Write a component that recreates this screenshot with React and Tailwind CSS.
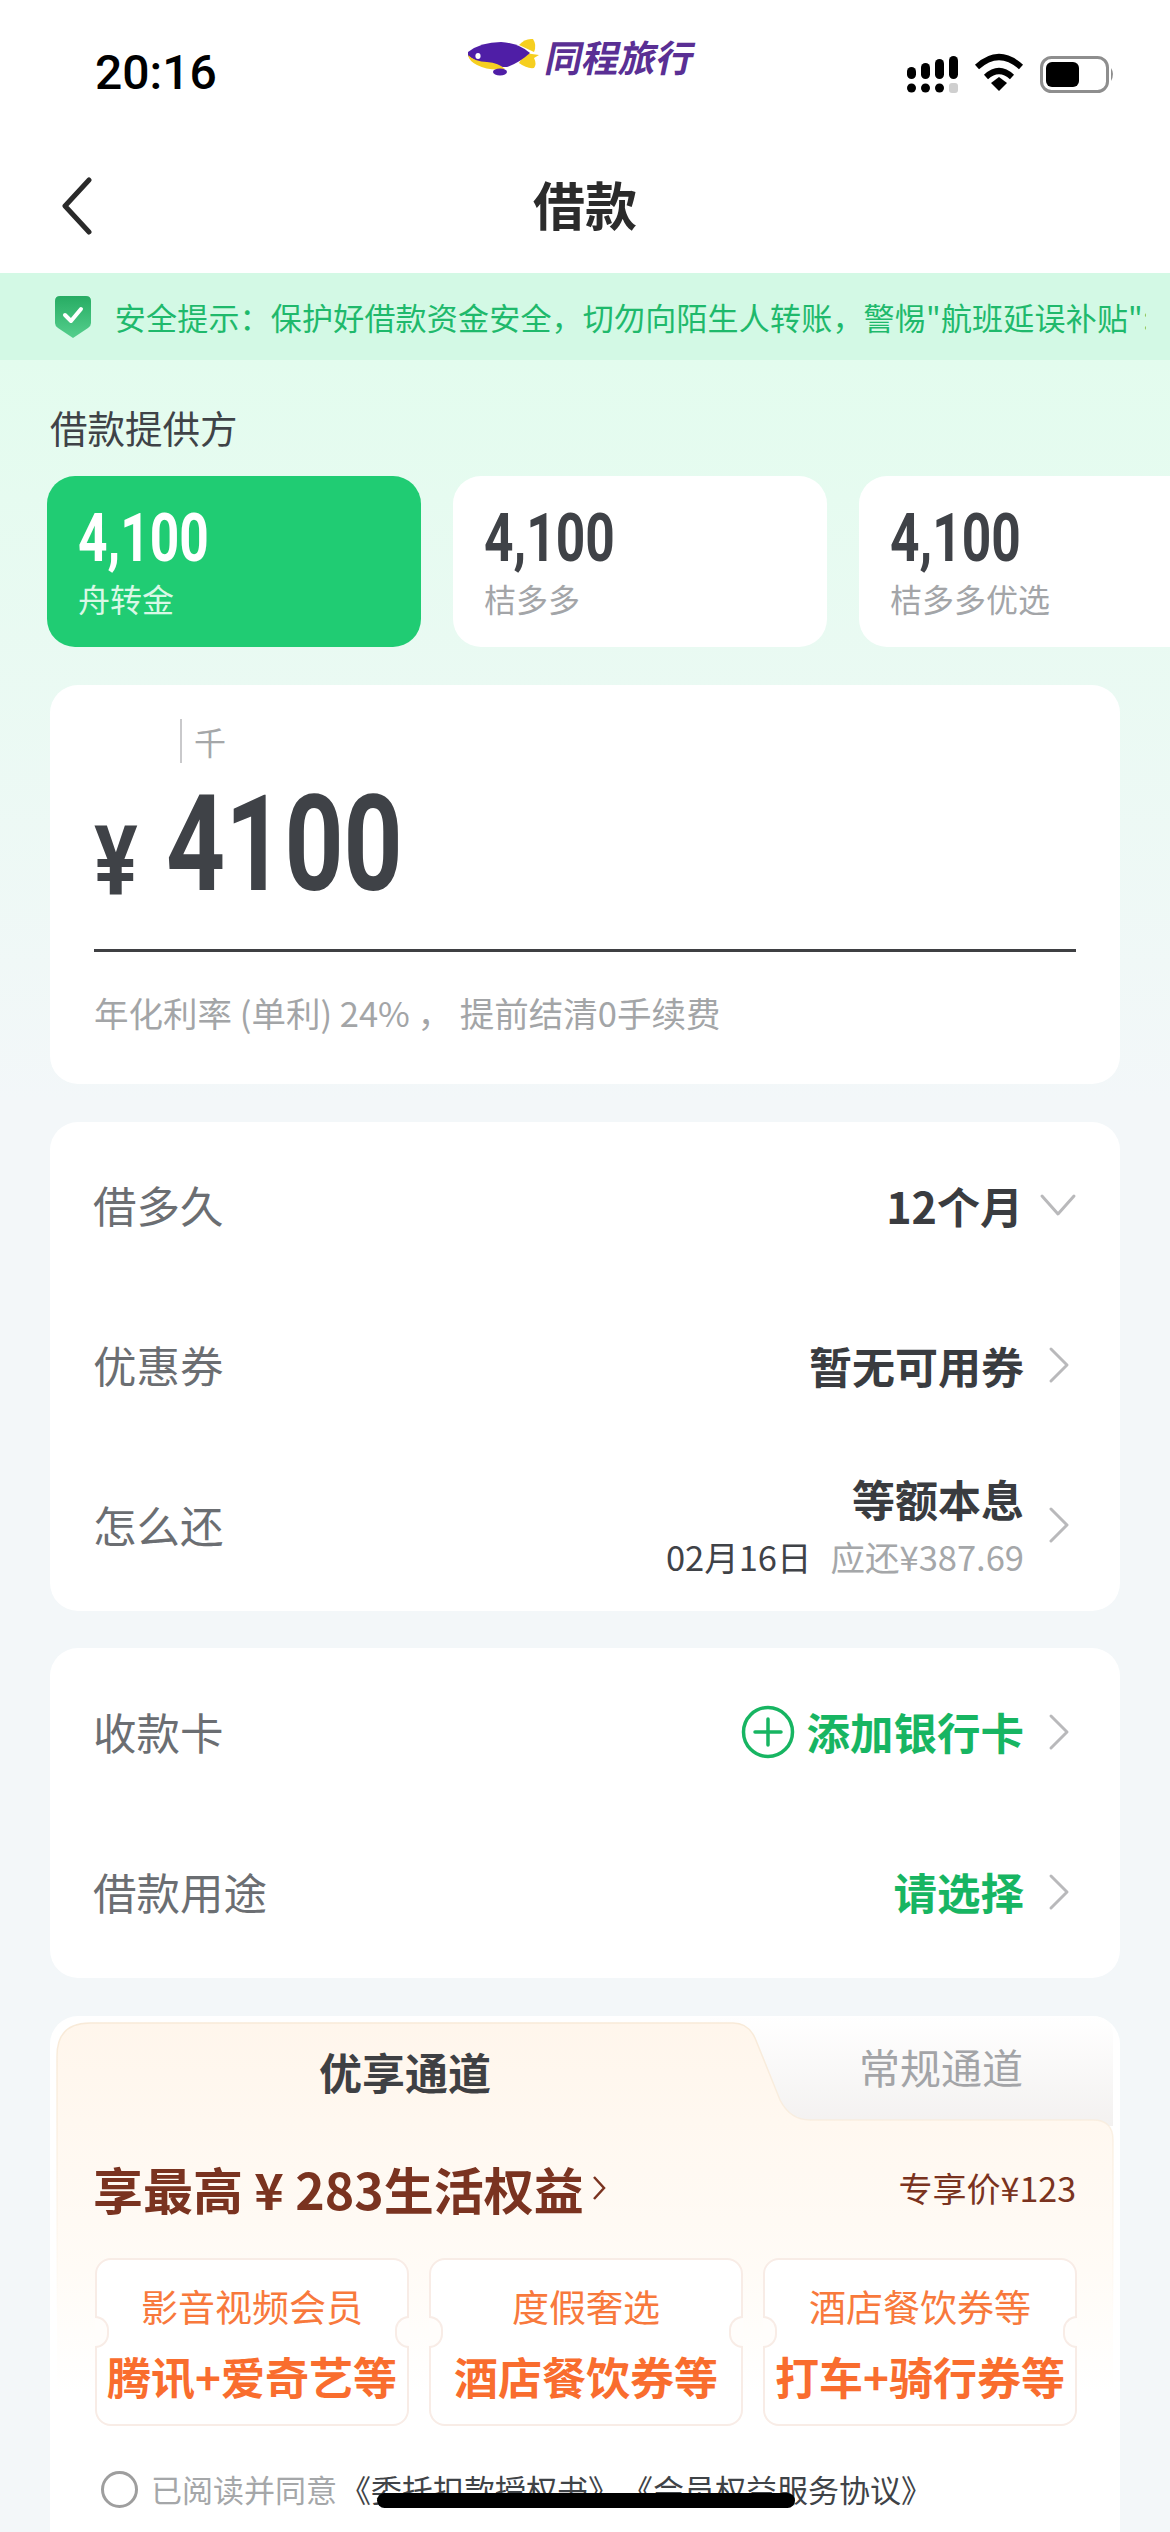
import React from "react";

const Chevron = ({ className = "" }) => (
  <svg className={className} width="22" height="38" viewBox="0 0 22 38" fill="none">
    <path d="M3 3 L19 19 L3 35" stroke="#b9b9bb" strokeWidth="3" strokeLinecap="round" strokeLinejoin="round" />
  </svg>
);

const Row = ({ label, children, chevron }) => (
  <div className="flex h-[160px] items-center justify-between pb-[4px] pl-[44px] pr-[50px]">
    <span className="-ml-[1px] text-[43.5px] leading-none text-[#6b6e72]">{label}</span>
    <div className="flex items-center">
      {children}
      {chevron || <Chevron className="ml-[24px]" />}
    </div>
  </div>
);

const Provider = ({ active, name }) => (
  <div className={`flex h-[171px] w-[374px] shrink-0 flex-col rounded-[28px] pl-[31px] pt-[27px] ${active ? "bg-[#20cc73]" : "bg-white"}`}>
    <span className={`origin-left scale-x-[0.78] font-['Roboto',sans-serif] text-[66px] font-bold leading-[72px] ${active ? "text-white" : "text-[#3f4247]"}`}>4,100</span>
    <span className={`mt-[3px] text-[32px] leading-[40px] ${active ? "text-[#d9f8e6]" : "text-[#a3a5a8]"}`}>{name}</span>
  </div>
);

const Coupon = ({ top, bottom }) => (
  <div className="relative flex h-[168px] w-[314px] flex-col items-center rounded-[16px] border-2 border-[#f8ece6] bg-white pt-[23px]">
    <span className="whitespace-nowrap text-[37px] leading-[46px] text-[#f8793c]">{top}</span>
    <span className="mt-[21px] whitespace-nowrap text-[44px] font-bold leading-[52px] text-[#f96d2e]">{bottom}</span>
    <div className="absolute -left-[2px] top-[56px] h-[32px] w-[14px] rounded-r-full border-2 border-l-0 border-[#f8ece6] bg-[#fffdfb]" />
    <div className="absolute -right-[2px] top-[56px] h-[32px] w-[14px] rounded-l-full border-2 border-r-0 border-[#f8ece6] bg-[#fffdfb]" />
  </div>
);

export default function App() {
  return (
    <div className="relative h-[2532px] w-[1170px] overflow-hidden bg-white font-['Noto_Sans_CJK_SC',sans-serif]">
      {/* status bar */}
      <div className="flex h-[136px] items-start pl-[95px]">
        <span className="mt-[43px] w-[372px] font-['Roboto',sans-serif] text-[48px] font-medium leading-[60px] text-black">20:16</span>
        <div className="mt-[36px] flex w-[440px] items-start">
          <svg width="72" height="42" viewBox="0 -4 72 42" className="mt-[1px]">
            <path d="M52 4 Q58 -3 66 -2 Q70 4 67 11 Z" fill="#f6cf20" />
            <path d="M52 22 Q60 28 67 27 Q70 23 67 17 L72 14 L58 12 Z" fill="#f6cf20" />
            <path d="M1 11 Q14 1 34 1 Q52 2 63 12 Q52 22 40 26 Q18 27 1 15 Z" fill="#4f1ea6" />
            <path d="M1 14 Q8 21 20 21 Q32 22 38 28 Q22 30 10 24 Q2 20 1 14 Z" fill="#f6cf20" />
            <ellipse cx="33" cy="31" rx="7" ry="3.4" fill="#4f1ea6" />
            <ellipse cx="11" cy="15" rx="2.6" ry="3" fill="#fff" />
          </svg>
          <span className="ml-[8px] -skew-x-12 whitespace-nowrap text-[37px] font-bold leading-[40px] text-[#5a2f94]">同程旅行</span>
        </div>
        <svg width="210" height="44" viewBox="0 0 210 44" className="mt-[53px]">
          <g fill="#000">
            <rect x="0" y="14" width="9" height="12" rx="4.5" />
            <rect x="14" y="10" width="9" height="16" rx="4.5" />
            <rect x="28" y="6" width="9" height="20" rx="4.5" />
            <rect x="42" y="3" width="9" height="23" rx="4.5" />
            <circle cx="4.5" cy="35" r="4.5" />
            <circle cx="18.5" cy="35" r="4.5" />
            <circle cx="32.5" cy="35" r="4.5" />
          </g>
          <rect x="42" y="30" width="9" height="10" rx="3" fill="#cfcfcf" />
          <g fill="none" stroke="#000" strokeWidth="6">
            <path d="M70 14 Q92 -6 114 14" />
            <path d="M79 24 Q92 12 105 24" />
          </g>
          <path d="M84 30 L92 24 L100 30 L92 38 Z" fill="#000" />
          <rect x="134.5" y="4.5" width="66" height="34" rx="10" fill="none" stroke="#8e8e8e" strokeWidth="3" />
          <rect x="139" y="9" width="33" height="25" rx="6" fill="#000" />
          <path d="M204 15 Q208 21 204 28 Z" fill="#8e8e8e" />
        </svg>
      </div>

      {/* nav */}
      <div className="relative flex h-[137px] items-center justify-center pb-[1px]">
        <svg width="34" height="58" viewBox="0 0 34 58" fill="none" className="absolute left-[60px] top-[41px]">
          <path d="M29 3 L5 29 L29 55" stroke="#2a2a2a" strokeWidth="5" strokeLinecap="round" strokeLinejoin="round" />
        </svg>
        <span className="text-[52px] font-bold leading-none text-[#2b2b2b]">借款</span>
      </div>

      {/* banner */}
      <div className="flex h-[87px] items-center bg-[#d3f9e5] pl-[54px]">
        <svg width="38" height="44" viewBox="0 0 38 44" className="shrink-0">
          <defs>
            <linearGradient id="sh" x1="0" y1="0" x2="0" y2="1">
              <stop offset="0" stopColor="#27ac63" />
              <stop offset="1" stopColor="#55cf8d" />
            </linearGradient>
          </defs>
          <path d="M6 1 H32 Q37 1 37 6 V28 Q37 31 34 33 L19 43 L4 33 Q1 31 1 28 V6 Q1 1 6 1 Z" fill="url(#sh)" />
          <path d="M11 20 L17 26 L27 14" fill="none" stroke="#fff" strokeWidth="4" strokeLinecap="round" strokeLinejoin="round" />
        </svg>
        <div className="ml-[21px] w-[1033px] overflow-hidden whitespace-nowrap text-[31px] leading-[44px] tracking-[0.2px] text-[#1fb96c]">
          <span className="-ml-[7px] inline-block">:安全提示：保护好借款资金安全，切勿向陌生人转账，警惕"航班延误补贴":</span>
        </div>
      </div>

      {/* body */}
      <div className="h-[2172px] bg-[linear-gradient(180deg,#e3fcee_0px,#f3f7f9_740px)]">
        <div className="pl-[50px] pt-[43px] text-[37.5px] leading-[48px] text-[#3f4347]">借款提供方</div>
        <div className="mt-[25px] flex gap-[32px] pl-[47px]">
          <Provider active name="舟转金" />
          <Provider name="桔多多" />
          <Provider name="桔多多优选" />
        </div>

        {/* amount */}
        <div className="mx-[50px] mt-[38px] h-[399px] rounded-[28px] bg-white pl-[44px] pr-[44px] pt-[34px]">
          <div className="flex h-[44px] items-center pl-[86px]">
            <span className="h-[44px] w-[2px] bg-[#c9c9cb]" />
            <span className="ml-[12px] text-[32px] leading-none text-[#a5a7a9]">千</span>
          </div>
          <div className="mt-[19px] flex h-[126px] items-end">
            <span className="mb-[2px] w-[58px] origin-left scale-x-[0.85] font-['Roboto',sans-serif] text-[96px] font-bold leading-[90px] text-[#3f4247]">¥</span>
            <span className="ml-[14px] origin-left scale-x-[0.77] font-['Roboto',sans-serif] text-[134px] font-bold leading-[126px] text-[#3f4247]">4100</span>
          </div>
          <div className="mt-[41px] h-[3px] bg-[#3f4043]" />
          <div className="mt-[38px] whitespace-nowrap text-[34.5px] leading-[44px] text-[#a3a5a7]">年化利率 (单利) 24% ， 提前结清0手续费</div>
        </div>

        {/* terms */}
        <div className="mx-[50px] mt-[38px] h-[489px] rounded-[28px] bg-white pt-[5px]">
          <Row
            label="借多久"
            chevron={
              <svg width="38" height="26" viewBox="0 0 38 26" fill="none" className="ml-[16px] -mr-[7px]">
                <path d="M3 4 L19 22 L35 4" stroke="#b9b9bb" strokeWidth="3" strokeLinecap="round" strokeLinejoin="round" />
              </svg>
            }
          >
            <span className="text-[43px] font-bold leading-none text-[#3a3c40]">12个月</span>
          </Row>
          <Row label="优惠券">
            <span className="text-[43px] font-bold leading-none text-[#3a3c40]">暂无可用券</span>
          </Row>
          <Row label="怎么还">
            <div className="flex flex-col items-end">
              <span className="text-[43px] font-bold leading-[52px] text-[#3a3c40]">等额本息</span>
              <div className="mt-[10px] flex items-center text-[34.5px] leading-[44px]">
                <span className="text-[#3f4247]">02月16日</span>
                <span className="ml-[19px] text-[#a5a7a9]">应还¥387.69</span>
              </div>
            </div>
          </Row>
        </div>

        {/* card */}
        <div className="mx-[50px] mt-[37px] h-[330px] rounded-[28px] bg-white pt-[6px]">
          <Row label="收款卡">
            <svg width="54" height="54" viewBox="0 0 54 54" fill="none" className="mr-[12px]">
              <circle cx="27" cy="27" r="24.5" stroke="#17b562" strokeWidth="3.5" />
              <path d="M27 14 V40 M14 27 H40" stroke="#17b562" strokeWidth="3.5" strokeLinecap="round" />
            </svg>
            <span className="text-[43.5px] font-bold leading-none text-[#17b562]">添加银行卡</span>
          </Row>
          <Row label="借款用途">
            <span className="text-[43.5px] font-bold leading-none text-[#17b562]">请选择</span>
          </Row>
        </div>

        {/* channel */}
        <div className="relative mx-[50px] mt-[38px] h-[600px] rounded-[28px] bg-white">
          <svg width="1070" height="500" viewBox="0 0 1070 500" className="absolute left-0 top-0">
            <defs>
              <linearGradient id="tabg" x1="0" y1="0" x2="0" y2="1">
                <stop offset="0" stopColor="#ffffff" />
                <stop offset="1" stopColor="#f3f1f0" />
              </linearGradient>
              <linearGradient id="peach" x1="0" y1="0" x2="0" y2="1">
                <stop offset="0" stopColor="#fff6ec" />
                <stop offset="0.5" stopColor="#fffbf6" />
                <stop offset="0.75" stopColor="#ffffff" />
              </linearGradient>
              <linearGradient id="edge" x1="0" y1="0" x2="0" y2="1">
                <stop offset="0" stopColor="#f8ead8" />
                <stop offset="0.6" stopColor="#f8ead8" stopOpacity="0" />
              </linearGradient>
            </defs>
            <path d="M660 0 H1042 Q1063 0 1063 21 V110 H660 Z" fill="url(#tabg)" />
            <path
              d="M7 40 Q7 7 40 7 H683 Q698 7 705 22 L730 84 Q740 104 760 104 H1043 Q1063 104 1063 124 V500 H7 Z"
              fill="url(#peach)"
            />
            <path
              d="M7 500 V40 Q7 7 40 7 H683 Q698 7 705 22 L730 84 Q740 104 760 104 H1043 Q1063 104 1063 124 V500"
              fill="none"
              stroke="url(#edge)"
              strokeWidth="1.5"
            />
          </svg>
          <div className="relative">
            <div className="flex h-[111px]">
              <div className="flex w-[712px] items-center justify-center pb-[1px] pr-[2px] text-[43px] font-bold leading-none text-[#3f4043]">优享通道</div>
              <div className="flex flex-1 items-start justify-center pt-[28px] text-[41px] leading-[44px] text-[#a3a4a7]">常规通道</div>
            </div>
            <div className="flex h-[122px] items-center justify-between pl-[44px] pr-[44px]">
              <div className="flex items-center">
                <span className="-ml-[1px] whitespace-nowrap text-[50px] font-bold leading-none text-[#7a3320]">享最高 ¥ 283生活权益</span>
                <svg width="14" height="28" viewBox="0 0 14 28" fill="none" className="ml-[8px]">
                  <path d="M2 3 L12 14 L2 25" stroke="#7a3320" strokeWidth="2.5" />
                </svg>
              </div>
              <span className="whitespace-nowrap text-[34px] leading-none text-[#7a3320]">专享价¥123</span>
            </div>
            <div className="mt-[9px] flex gap-[20px] pl-[45px]">
              <Coupon top="影音视频会员" bottom="腾讯+爱奇艺等" />
              <Coupon top="度假奢选" bottom="酒店餐饮券等" />
              <Coupon top="酒店餐饮券等" bottom="打车+骑行券等" />
            </div>
            <div className="mt-[41px] flex items-center pl-[51px]">
              <span className="h-[37px] w-[37px] shrink-0 rounded-full border-[3px] border-[#9e9e9e]" />
              <span className="ml-[13px] whitespace-nowrap text-[31px] leading-[44px] text-[#a5a7a9]">已阅读并同意</span>
              <span className="ml-[3px] whitespace-nowrap text-[31px] leading-[44px] text-[#3f4347]">《委托扣款授权书》</span>
              <span className="ml-[3px] whitespace-nowrap text-[31px] leading-[44px] text-[#3f4347]">《会员权益服务协议》</span>
            </div>
            <div className="mt-[13px] whitespace-nowrap pl-[50px] text-[31px] leading-[44px] text-[#3f4347]">借款协议、个人征信授权书</div>
          </div>
        </div>
      </div>

      {/* home indicator */}
      <div className="absolute left-[377px] top-[2493px] h-[15px] w-[418px] rounded-full bg-black" />
    </div>
  );
}
